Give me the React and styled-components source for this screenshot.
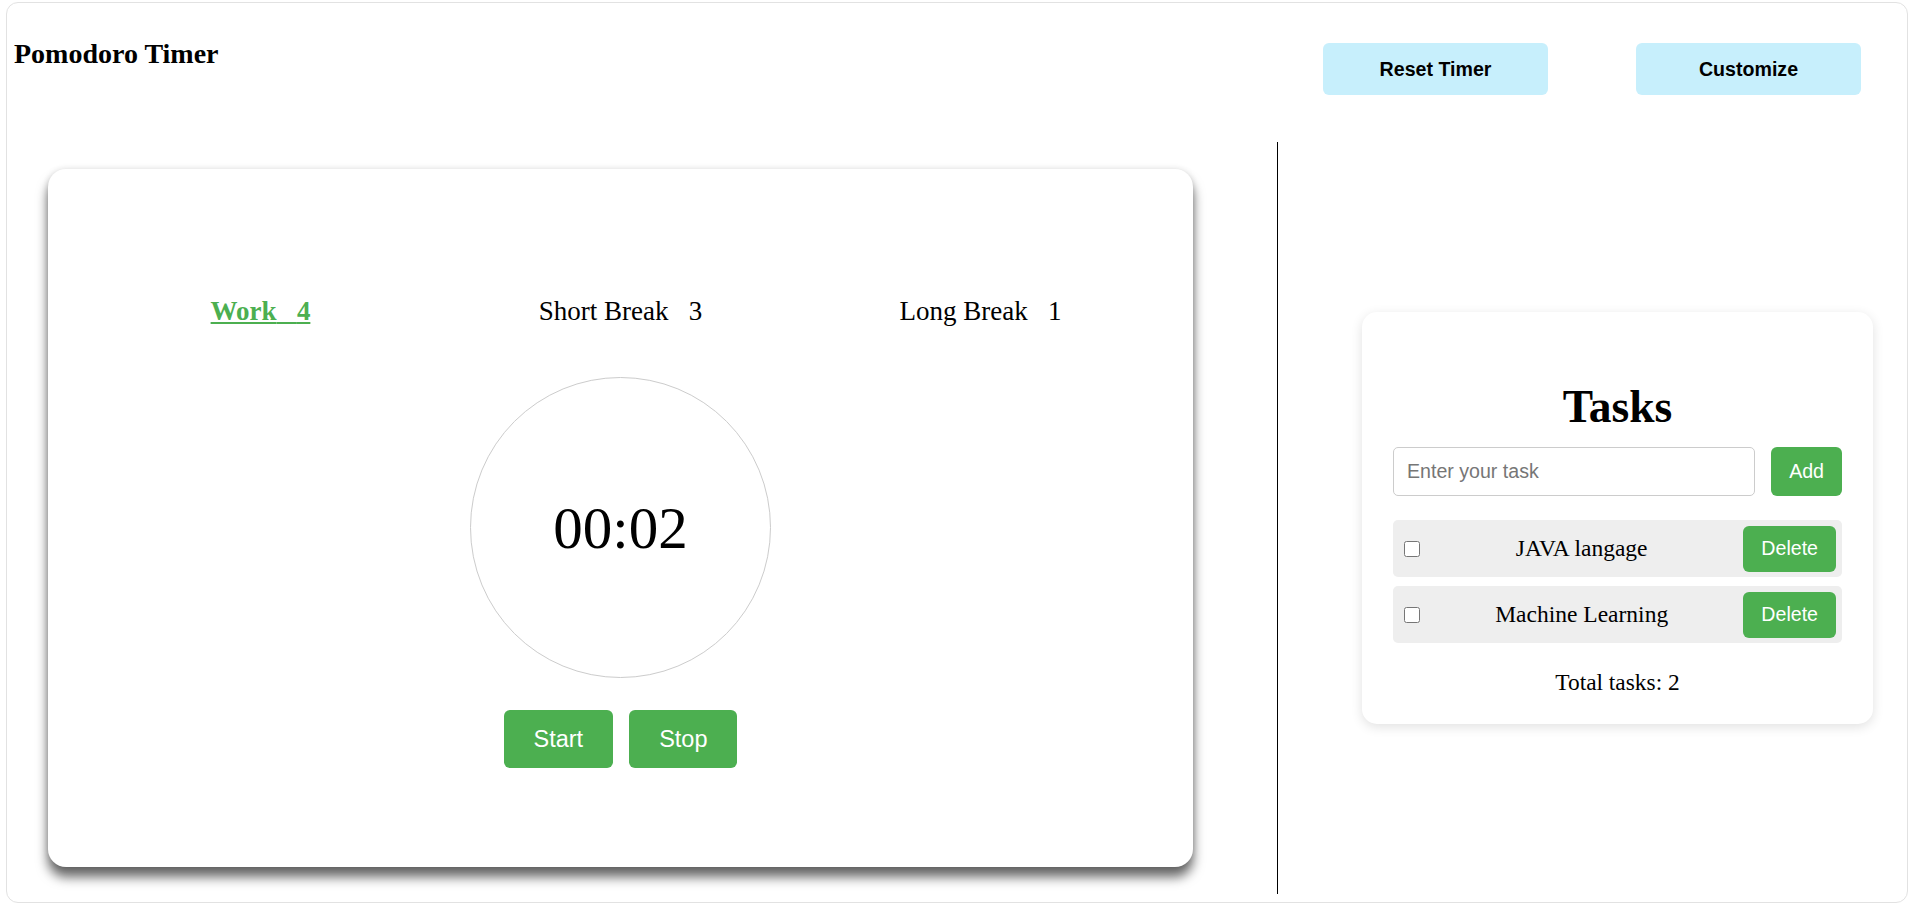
import React, { useState } from 'react'
import styled, { createGlobalStyle } from 'styled-components'

const GlobalStyle = createGlobalStyle`
  html, body {
    margin: 0;
    padding: 0;
    background: #ffffff;
  }
  body {
    font-family: "Liberation Serif", "Times New Roman", serif;
    color: #000;
  }
  * {
    box-sizing: border-box;
  }
`

const Frame = styled.div`
  margin: 2px 12px 1px 6px;
  height: 901px;
  border: 1px solid #e2e2e2;
  border-radius: 12px;
  display: flex;
  flex-direction: column;
  overflow: hidden;
`

const Header = styled.header`
  height: 139px;
  display: flex;
  justify-content: space-between;
  align-items: flex-start;
  padding: 35px 46px 0 7px;
`

const Title = styled.h1`
  margin: 0;
  font-size: 28px;
  line-height: 32px;
  font-weight: bold;
`

const HeaderActions = styled.div`
  display: flex;
  gap: 88px;
  margin-top: 5px;
`

const LightButton = styled.button`
  width: 225px;
  height: 52px;
  border: none;
  border-radius: 6px;
  background: #c7effc;
  color: #000;
  font-family: "Liberation Sans", Arial, sans-serif;
  font-weight: bold;
  font-size: 19.6px;
  cursor: pointer;
`

const Main = styled.main`
  height: 752px;
  display: flex;
  align-items: center;
`

const LeftCol = styled.section`
  width: 1270px;
  padding-left: 41px;
  display: flex;
  align-items: center;
`

const TimerCard = styled.div`
  width: 1145px;
  height: 698px;
  border-radius: 18px;
  background: #fff;
  box-shadow: 0 10px 12px rgba(0, 0, 0, 0.6), 0 0 6px rgba(0, 0, 0, 0.12);
  padding: 127px 32px 0;
  display: flex;
  flex-direction: column;
  align-items: center;
`

const Tabs = styled.div`
  display: grid;
  grid-template-columns: repeat(3, 360px);
  justify-content: center;
  width: 100%;
  margin-bottom: 50px;
`

const Tab = styled.span`
  text-align: center;
  font-size: 27px;
  line-height: 31px;
  font-weight: ${p => (p.$active ? 'bold' : 'normal')};
  color: ${p => (p.$active ? '#4caf50' : '#000')};
  text-decoration: ${p => (p.$active ? 'underline' : 'none')};
  cursor: pointer;
`

const Circle = styled.div`
  width: 301px;
  height: 301px;
  border-radius: 50%;
  border: 1px solid #cccccc;
  display: flex;
  align-items: center;
  justify-content: center;
  margin-bottom: 32px;
`

const Time = styled.span`
  font-size: 59px;
  line-height: 1;
  margin-top: 2px;
`

const Controls = styled.div`
  display: flex;
  gap: 16px;
`

const GreenButton = styled.button`
  height: ${p => p.$h || 58}px;
  padding: 0 ${p => p.$px || 30}px;
  border: none;
  border-radius: 6px;
  background: #4caf50;
  color: #fff;
  font-family: "Liberation Sans", Arial, sans-serif;
  font-size: ${p => p.$fs || 23.5}px;
  cursor: pointer;
  flex-shrink: 0;
`

const Divider = styled.div`
  width: 1px;
  align-self: stretch;
  background: #000;
`

const RightCol = styled.aside`
  flex: 1;
  padding-left: 84px;
  display: flex;
  align-items: center;
`

const TaskCard = styled.div`
  width: 511px;
  height: 412px;
  border-radius: 15px;
  background: #fff;
  box-shadow: 0 3px 12px rgba(0, 0, 0, 0.12);
  padding: 69px 31px 0;
  display: flex;
  flex-direction: column;
`

const TaskTitle = styled.h2`
  margin: 0 0 14px;
  text-align: center;
  font-size: 45.5px;
  line-height: 52px;
  font-weight: bold;
`

const InputRow = styled.div`
  display: flex;
  gap: 16px;
  margin-bottom: 24px;
`

const TaskInput = styled.input`
  flex: 1;
  height: 49px;
  border: 1px solid #cccccc;
  border-radius: 5px;
  padding: 0 13px;
  font-family: "Liberation Sans", Arial, sans-serif;
  font-size: 19.6px;
  outline: none;
  &::placeholder {
    color: #767676;
  }
`

const TaskList = styled.ul`
  list-style: none;
  margin: 0 0 26px;
  padding: 0;
  display: flex;
  flex-direction: column;
  gap: 9px;
`

const TaskRow = styled.li`
  height: 57px;
  background: #eeeeee;
  border-radius: 5px;
  padding: 0 6px 0 11px;
  display: flex;
  align-items: center;
`

const Check = styled.input`
  width: 16px;
  height: 16px;
  margin: 0;
`

const TaskText = styled.span`
  flex: 1;
  text-align: center;
  font-size: 23.5px;
  text-decoration: ${p => (p.$done ? 'line-through' : 'none')};
`

const Total = styled.p`
  margin: 0;
  text-align: center;
  font-size: 23.4px;
  line-height: 27px;
`

const App = () => {
  const [mode, setMode] = useState('work')
  const [tasks, setTasks] = useState([
    { id: 1, text: 'JAVA langage', done: false },
    { id: 2, text: 'Machine Learning', done: false },
  ])
  const [draft, setDraft] = useState('')

  const gap = '\u00a0\u00a0\u00a0'

  const addTask = () => {
    if (!draft.trim()) return
    setTasks([...tasks, { id: Date.now(), text: draft.trim(), done: false }])
    setDraft('')
  }

  return (
    <>
      <GlobalStyle />
      <Frame>
        <Header>
          <Title>Pomodoro Timer</Title>
          <HeaderActions>
            <LightButton>Reset Timer</LightButton>
            <LightButton>Customize</LightButton>
          </HeaderActions>
        </Header>
        <Main>
          <LeftCol>
            <TimerCard>
              <Tabs>
                <Tab $active={mode === 'work'} onClick={() => setMode('work')}>
                  Work{gap}4
                </Tab>
                <Tab $active={mode === 'short'} onClick={() => setMode('short')}>
                  Short Break{gap}3
                </Tab>
                <Tab $active={mode === 'long'} onClick={() => setMode('long')}>
                  Long Break{gap}1
                </Tab>
              </Tabs>
              <Circle>
                <Time>00:02</Time>
              </Circle>
              <Controls>
                <GreenButton>Start</GreenButton>
                <GreenButton>Stop</GreenButton>
              </Controls>
            </TimerCard>
          </LeftCol>
          <Divider />
          <RightCol>
            <TaskCard>
              <TaskTitle>Tasks</TaskTitle>
              <InputRow>
                <TaskInput
                  placeholder="Enter your task"
                  value={draft}
                  onChange={e => setDraft(e.target.value)}
                />
                <GreenButton $h={49} $px={18} $fs={19.6} onClick={addTask}>
                  Add
                </GreenButton>
              </InputRow>
              <TaskList>
                {tasks.map(t => (
                  <TaskRow key={t.id}>
                    <Check
                      type="checkbox"
                      checked={t.done}
                      onChange={() =>
                        setTasks(tasks.map(x => (x.id === t.id ? { ...x, done: !x.done } : x)))
                      }
                    />
                    <TaskText $done={t.done}>{t.text}</TaskText>
                    <GreenButton
                      $h={46}
                      $px={18}
                      $fs={19.6}
                      onClick={() => setTasks(tasks.filter(x => x.id !== t.id))}
                    >
                      Delete
                    </GreenButton>
                  </TaskRow>
                ))}
              </TaskList>
              <Total>Total tasks: {tasks.length}</Total>
            </TaskCard>
          </RightCol>
        </Main>
      </Frame>
    </>
  )
}

export default App
